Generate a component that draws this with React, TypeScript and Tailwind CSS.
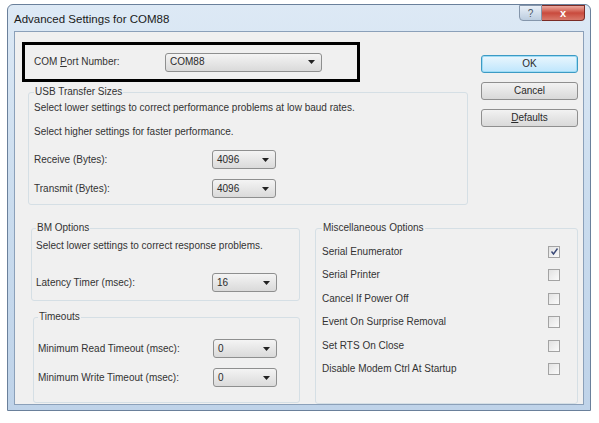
import React from 'react';

const font = { fontFamily: '"Liberation Sans", Arial, sans-serif' };

function Select({ value, width }: { value: string; width: string }) {
  return (
    <div
      className={`${width} h-[19px] flex items-center justify-between rounded-[3px] border border-[#8e8f8f] bg-gradient-to-b from-[#f4f4f4] to-[#dadada] pl-[4px] pr-[6px] text-[10px] text-[#2a2a2a]`}
    >
      <span>{value}</span>
      <svg width="7" height="4" viewBox="0 0 7 4">
        <path d="M0 0h7L3.5 4z" fill="#222" />
      </svg>
    </div>
  );
}

function Button({ label, focused }: { label: React.ReactNode; focused?: boolean }) {
  return (
    <div
      className={`h-[18px] flex items-center justify-center rounded-[3px] border text-[10px] text-[#2a2a2a] ${
        focused
          ? 'border-[#3c9ac4] bg-gradient-to-b from-[#eaf6fd] to-[#bee6fd] shadow-[inset_0_0_0_1px_#9fdcf5]'
          : 'border-[#8f8f8f] bg-gradient-to-b from-[#f2f2f2] to-[#d9d9d9]'
      }`}
    >
      {label}
    </div>
  );
}

function Checkbox({ checked }: { checked?: boolean }) {
  return (
    <div className="w-[12px] h-[12px] border border-[#a3a3a3] bg-gradient-to-br from-[#e2e2e2] to-[#fbfbfb] flex items-center justify-center">
      {checked && (
        <svg width="9" height="9" viewBox="0 0 9 9">
          <path d="M1.5 4.5l2 2.5L7.5 1.5" stroke="#3b4a78" strokeWidth="1.4" fill="none" />
        </svg>
      )}
    </div>
  );
}

const miscOptions = [
  { label: 'Serial Enumerator', checked: true },
  { label: 'Serial Printer' },
  { label: 'Cancel If Power Off' },
  { label: 'Event On Surprise Removal' },
  { label: 'Set RTS On Close' },
  { label: 'Disable Modem Ctrl At Startup' },
];

export default function App() {
  return (
    <div className="w-[599px] h-[423px] bg-white pt-[4px] pl-[7px]" style={font}>
      <div className="w-[584px] h-[407px] flex flex-col rounded-t-[6px] border border-[#6a809b] bg-gradient-to-b from-[#dde9f5] via-[#cadcee] to-[#bfd3e9]">
        {/* title bar */}
        <div className="h-[26px] flex items-start justify-between pl-[6px] pr-[5px]">
          <span className="mt-[6px] text-[11.5px] text-[#1a1a1a]">Advanced Settings for COM88</span>
          <div className="flex">
            <div className="w-[23px] h-[16px] flex items-center justify-center rounded-bl-[4px] border border-[#8596ab] bg-gradient-to-b from-[#e9f0f8] to-[#bccddf] text-[10px] text-[#4a5668]">
              ?
            </div>
            <div className="w-[43px] h-[16px] flex items-center justify-center rounded-br-[4px] border border-l-0 border-[#7a2b25] bg-gradient-to-b from-[#eaa89f] via-[#c94a3d] to-[#d8786a] text-white text-[11px] font-bold">
              x
            </div>
          </div>
        </div>

        {/* client area */}
        <div className="flex-1 mx-[6px] mb-[5px] bg-[#f0f0f0] border border-[#8ba0b9] text-[10px] leading-[12px] text-[#333]">
          <div className="flex pt-[10px]">
            <div className="ml-[7px] w-[446px]">
              <div className="w-[338px] h-[40px] border-[3px] border-black flex items-center pl-[9px]">
                <span className="w-[131px]">
                  COM <span className="underline">P</span>ort Number:
                </span>
                <Select value="COM88" width="w-[157px]" />
              </div>

              <fieldset className="ml-[6px] mt-[4px] w-[440px] h-[119px] border border-[#d5dfe5] rounded-[3px] px-[5px]">
                <legend className="px-[1px]">USB Transfer Sizes</legend>
                <div className="mt-[4px]">Select lower settings to correct performance problems at low baud rates.</div>
                <div className="mt-[12px]">Select higher settings for faster performance.</div>
                <div className="mt-[12px] flex items-center">
                  <span className="w-[178px]">Receive (Bytes):</span>
                  <Select value="4096" width="w-[64px]" />
                </div>
                <div className="mt-[10px] flex items-center">
                  <span className="w-[178px]">Transmit (Bytes):</span>
                  <Select value="4096" width="w-[64px]" />
                </div>
              </fieldset>
            </div>

            <div className="ml-[13px] mt-[13px] w-[97px] flex flex-col gap-[9px]">
              <Button label="OK" focused />
              <Button label="Cancel" />
              <Button
                label={
                  <span>
                    <span className="underline">D</span>efaults
                  </span>
                }
              />
            </div>
          </div>

          <div className="flex mt-[17px] ml-[16px]">
            <div className="w-[269px]">
              <fieldset className="h-[79px] border border-[#d5dfe5] rounded-[3px] px-[4px]">
                <legend className="px-[1px]">BM Options</legend>
                <div className="mt-[6px]">Select lower settings to correct response problems.</div>
                <div className="mt-[21px] flex items-center">
                  <span className="w-[176px]">Latency Timer (msec):</span>
                  <Select value="16" width="w-[65px]" />
                </div>
              </fieldset>

              <fieldset className="ml-[2px] mt-[10px] h-[92px] border border-[#d5dfe5] rounded-[3px] px-[4px]">
                <legend className="px-[1px]">Timeouts</legend>
                <div className="mt-[16px] flex items-center">
                  <span className="w-[175px]">Minimum Read Timeout (msec):</span>
                  <Select value="0" width="w-[64px]" />
                </div>
                <div className="mt-[10px] flex items-center">
                  <span className="w-[175px]">Minimum Write Timeout (msec):</span>
                  <Select value="0" width="w-[64px]" />
                </div>
              </fieldset>
            </div>

            <fieldset className="ml-[15px] w-[263px] h-[182px] border border-[#d5dfe5] rounded-[3px] pl-[6px] pr-[17px]">
              <legend className="px-[1px]">Miscellaneous Options</legend>
              <div className="mt-[6px] flex flex-col">
                {miscOptions.map(o => (
                  <div key={o.label} className="h-[23.5px] flex items-center justify-between">
                    <span>{o.label}</span>
                    <Checkbox checked={o.checked} />
                  </div>
                ))}
              </div>
            </fieldset>
          </div>
        </div>
      </div>
    </div>
  );
}
